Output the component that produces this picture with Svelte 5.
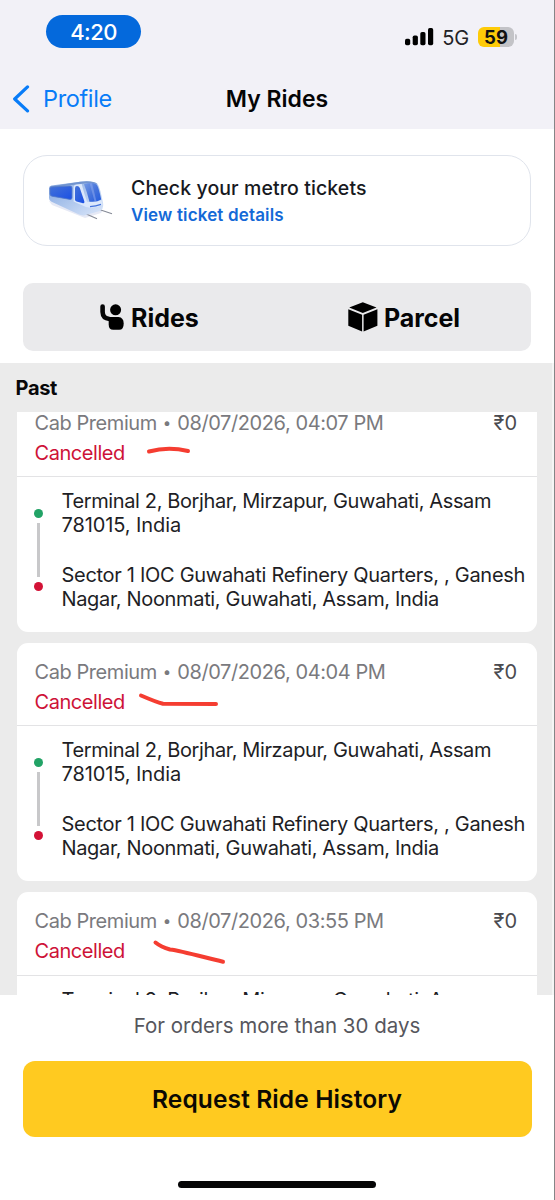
<script>
  const stops = [
    [
      { text: 'Terminal 2, Borjhar, Mirzapur, Guwahati, Assam', track: 'a' },
      { text: '781015, India', track: 'b' }
    ],
    [
      { text: 'Sector 1 IOC Guwahati Refinery Quarters, , Ganesh', track: 'c' },
      { text: 'Nagar, Noonmati, Guwahati, Assam, India', track: 'd' }
    ]
  ];
  const rides = [
    { time: '04:07 PM', stops, mark: 'M149 451 Q168 446 188 450.5', top: 393.5 },
    { time: '04:04 PM', stops, mark: 'M141 695.5 Q156 702 163 703.8 L216 704', top: 643 },
    { time: '03:55 PM', stops: [[stops[0][0]]], mark: 'M155.5 942.5 Q161 947 170 949.5 C182 951 203 957 223 961.7', top: 892 }
  ];
</script>

<div class="screen">
  <header>
    <div class="status">
      <div class="time"><span>4:20</span></div>
      <div class="indicators">
        <svg class="signal" width="29" height="18" viewBox="0 0 29 18">
          <rect x="0" y="10.8" width="5.2" height="6.4" rx="1.7" />
          <rect x="7.7" y="7.6" width="5.2" height="9.6" rx="1.7" />
          <rect x="15.3" y="4" width="5.2" height="13.2" rx="1.7" />
          <rect x="23" y="0" width="5.2" height="17.2" rx="1.7" />
        </svg>
        <span class="network">5G</span>
        <div class="battery"><span>59</span></div>
        <i class="nub"></i>
      </div>
    </div>
    <nav>
      <a class="back">
        <svg width="18" height="28" viewBox="0 0 18 28"><path d="M15.5 1.9 L2.7 14 L15.5 25.9" /></svg>
        <span>Profile</span>
      </a>
      <h1><span>My Rides</span></h1>
    </nav>
  </header>

  <section class="metro">
    <svg width="66" height="42" viewBox="0 0 66 42">
      <defs>
        <linearGradient id="body" x1="0" y1="0" x2="1" y2="1"><stop offset="0" stop-color="#86a8e2" /><stop offset=".4" stop-color="#a5c0ea" /><stop offset="1" stop-color="#dbe7fa" /></linearGradient>
        <linearGradient id="glass" x1="0" y1="0" x2="1" y2="1"><stop offset="0" stop-color="#4472d8" /><stop offset="1" stop-color="#1b50e4" /></linearGradient>
        <linearGradient id="front" x1="0" y1="0" x2="1" y2="1"><stop offset="0" stop-color="#7399e4" /><stop offset=".5" stop-color="#4774dc" /><stop offset="1" stop-color="#235bdd" /></linearGradient>
      </defs>
      <path d="M1 21 L4 25 L37 38 L53 33 L55 30 Z" fill="#e6e9f5" />
      <path d="M36 33 L49 38.7 M49 28.7 L64 33.7" fill="none" stroke="#858a96" stroke-width="1.1" />
      <path d="M1 8 Q1 6 3.5 5.5 L32 1.8 Q45 .3 49.5 4 Q52 7 55.2 24 Q55.5 29 52 31 L36 35.5 Q34 35.7 31 34.5 L3 21.5 Q1 20.5 1 18 Z" fill="url(#body)" />
      <path d="M2 6.5 L32 1.8 Q45 .3 49.5 4 Q41 2.6 34 3.7 L4 7.5 Z" fill="#7194cf" />
      <path d="M2 8.3 Q2 7 4 7 L22 6 Q24 6 24 8 V17.5 Q24 19.7 22 19.4 L4 16.2 Q2 15.8 2 14 Z" fill="url(#glass)" stroke="#5379c7" stroke-width=".8" />
      <path d="M25.6 21.5 V7 Q25.8 4.6 29 4.4 L33.7 4 Q36 13 39 21.7 Q46 23 53.5 20.3 L54.6 25 Q47 29 38 27 Z" fill="#dce8fb" />
      <path d="M27 8.2 Q27 6 29 6 Q31 6 31.8 8 L36.3 21.3 Q36.8 23.6 35 23.2 L28.6 21.5 Q27 21 27 19.3 Z" fill="url(#glass)" />
      <path d="M36 4.3 Q43 1.5 48.7 4.4 Q51 8 53.2 19.5 Q49 22.5 41.5 21.7 Q39 12 36 4.3Z" fill="url(#front)" />
      <path d="M41.6 3.2 L46.6 21.4 L48.4 21 L44 3.2Z" fill="#91acf0" opacity=".5" />
      <path d="M42 26.6 Q48 26.1 53 24.4" fill="none" stroke="#4474dd" stroke-width="1.4" />
    </svg>
    <div class="metro-text">
      <strong><span>Check your metro tickets</span></strong>
      <a><span>View ticket details</span></a>
    </div>
  </section>

  <div class="tabs">
    <div class="tab rides-tab">
      <svg width="24" height="28" viewBox="0 0 24 28">
        <path d="M2.6 3.6 V9 Q2.8 15.4 9.5 16 L14 16.2" fill="none" stroke="#050506" stroke-width="4.6" stroke-linecap="round" />
        <circle cx="15.6" cy="6.8" r="5.5" />
        <path d="M8.7 14 H18.5 Q23.7 14.5 23.7 20.5 Q23.7 26.8 19.2 26.8 H13.2 Q8.7 26.8 8.7 21.5Z" />
      </svg>
      <span>Rides</span>
    </div>
    <div class="tab parcel-tab">
      <svg width="30" height="30" viewBox="0 0 30 30">
        <path d="M14.8 .3 L28.5 5.5 L14.8 11 L1.2 5.5Z M.3 7.3 L14.1 12.8 V29.6 L.3 23.8Z M29.4 7.3 L15.6 12.8 V29.6 L29.4 23.8Z" />
      </svg>
      <span>Parcel</span>
    </div>
  </div>

  <main>
    <h2><span>Past</span></h2>
    <div class="viewport">
      <div class="list">
        {#each rides as ride}
          <article>
            <div class="summary">
              <div class="line">
                <div class="when"><span class="kind">Cab Premium</span><span class="bullet">•</span><span class="date">08/07/2026, {ride.time}</span></div>
                <span class="fare">₹0</span>
              </div>
              <div class="state"><span>Cancelled</span></div>
            </div>
            <div class="route">
              <div class="track"><i class="from"></i><i class="bar"></i><i class="to"></i></div>
              <div class="places">
                {#each ride.stops as stop}
                  <p>
                    {#each stop as row}<span class={row.track}>{row.text}</span>{/each}
                  </p>
                {/each}
              </div>
            </div>
            <svg class="mark" width="520" height="238" viewBox="17 {ride.top} 520 238"><path d={ride.mark} /></svg>
          </article>
        {/each}
      </div>
    </div>
  </main>

  <footer>
    <p><span>For orders more than 30 days</span></p>
    <button><span>Request Ride History</span></button>
    <i class="home"></i>
  </footer>
</div>

<style>
  :global(body) { margin: 0; background: #fff; }
  * { box-sizing: border-box; }
  h1, h2, p { margin: 0; font: inherit; }
  .screen { width: 555px; height: 1200px; overflow: hidden; display: flex; flex-direction: column; background: #fff; border-right: 1px solid #858587; font-family: Inter, "Liberation Sans", sans-serif; color: #1c1c22; white-space: nowrap; }
  header { height: 129px; flex: none; background: #f2f1f7; }
  .status { height: 68px; display: flex; justify-content: space-between; padding: 15px 37px 0 46px; }
  .time { width: 95px; height: 33px; border-radius: 17px; background: #0469dc; color: #fff; font-size: 22px; font-weight: 500; line-height: 34px; text-align: center; letter-spacing: -.6px; }
  .indicators { display: flex; align-items: center; height: 43px; }
  .signal { margin-top: 1px; }
  .network { margin: 2px 0 0 8px; font-size: 20px; line-height: 24px; letter-spacing: -.2px; color: #222226; }
  .battery { margin-left: 9px; width: 36px; height: 20px; border-radius: 6px; background: linear-gradient(90deg, #fecb08 60%, #c3c3c7 60%); color: #111; font-size: 18.5px; font-weight: 700; line-height: 20px; text-align: center; }
  .nub { width: 2px; height: 6px; margin-left: 1px; background: #c5c5ca; border-radius: 0 2px 2px 0; }
  nav { height: 61px; display: grid; grid-template-columns: 1fr auto 1fr; align-items: center; }
  .back { display: flex; align-items: center; gap: 13px; padding-left: 12px; color: #087cf8; font-size: 23.5px; letter-spacing: -.35px; }
  .back path { fill: none; stroke: #087cf8; stroke-width: 3.2; stroke-linecap: round; stroke-linejoin: round; }
  h1 { font-size: 23px; font-weight: 600; color: #050506; }
  .metro { flex: none; height: 91px; margin: 26px 23px 0; border: 1.5px solid #e0e4ec; border-radius: 24px; display: flex; padding: 19px 24px; }
  .metro > svg { margin-top: 5px; }
  .metro-text { display: flex; flex-direction: column; padding-left: 17px; }
  strong { font-size: 19.5px; line-height: 26px; font-weight: 500; color: #17191e; letter-spacing: .1px; }
  .metro-text a { color: #1469d7; font-size: 17px; font-weight: 600; line-height: 22px; margin-top: 3px; letter-spacing: .15px; }
  .tabs { flex: none; height: 68px; margin: 37px 23px 12px; border-radius: 10px; background: #eaeaec; display: grid; grid-template-columns: 1fr 1fr; font-size: 25px; font-weight: 700; color: #050506; }
  .tab { display: flex; align-items: center; }
  .tab > span { padding-top: 2px; }
  .rides-tab { padding-left: 77px; gap: 7px; }
  .parcel-tab { padding-left: 71px; gap: 6px; letter-spacing: -.05px; }
  main { flex: none; height: 632px; background: #ebebeb; border-right: 2px solid #f5f5f5; display: flex; flex-direction: column; }
  h2 { height: 49px; flex: none; padding-left: 15.5px; font-size: 20px; line-height: 50px; font-weight: 700; color: #08080a; letter-spacing: -.3px; }
  .viewport { flex: 1; min-height: 0; overflow: hidden; padding: 0 15px 0 17px; }
  .list { display: flex; flex-direction: column; gap: 11.3px; margin-top: -18.5px; }
  article { position: relative; flex: none; width: 520px; height: 238px; border-radius: 11px; background: #fff; }
  .summary { height: 83.5px; padding: 17px 20px 0 17.5px; border-bottom: 1.5px solid #e3e3e5; font-size: 20px; }
  .line { display: flex; justify-content: space-between; height: 24px; line-height: 24px; color: #7a7a7e; }
  .when { display: flex; }
  .kind { letter-spacing: -.43px; }
  .bullet { width: 20.5px; text-align: center; font-size: 15px; }
  .date { letter-spacing: -.41px; }
  .fare { color: #4b4b50; }
  .state { color: #ce1237; line-height: 24px; margin-top: 6px; letter-spacing: -.45px; }
  .route { display: flex; padding-left: 17px; }
  .track { width: 9px; flex: none; display: flex; flex-direction: column; align-items: center; padding-top: 31.5px; }
  .from, .to { width: 9px; height: 9px; border-radius: 50%; background: #22a366; }
  .to { background: #d31236; }
  .bar { width: 3px; height: 54px; margin: 5px 0; background: #c8c8ca; }
  .places { padding: 12px 0 0 18.5px; font-size: 20px; line-height: 24px; color: #1e1e25; }
  .places span { display: block; }
  .places p + p { margin-top: 25.5px; }
  .a { letter-spacing: -.38px; }
  .b { letter-spacing: -.1px; }
  .c { letter-spacing: -.3px; }
  .d { letter-spacing: -.34px; }
  .mark { position: absolute; inset: 0; }
  .mark path { fill: none; stroke: #f53d31; stroke-width: 4; stroke-linecap: round; }
  footer { flex: 1; display: flex; flex-direction: column; align-items: center; color: #56565d; font-size: 20.5px; }
  footer p { line-height: 26px; margin-top: 18px; }
  button { width: 509px; height: 76px; margin-top: 22px; padding: 0; border: 0; border-radius: 12px; background: #ffca20; color: #0b0903; font: 600 24.5px Inter, sans-serif; letter-spacing: .12px; }
  .home { width: 198px; height: 7px; border-radius: 4px; background: #050506; margin-top: 44px; }
</style>
